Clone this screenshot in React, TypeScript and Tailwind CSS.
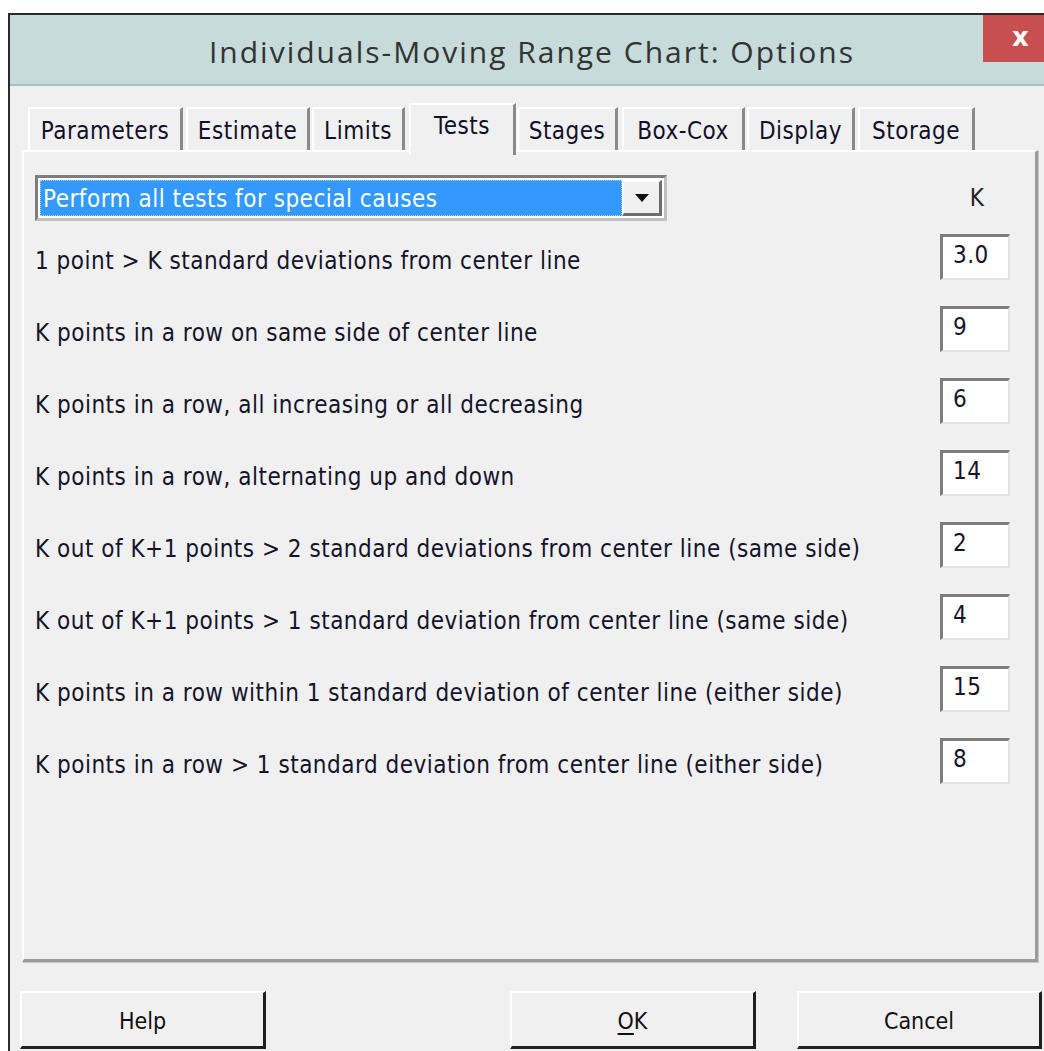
import { useState } from "react";

const tabs = [
  { name: "Parameters", w: "w-[155px] mr-[3px]" },
  { name: "Estimate", w: "w-[124px] mr-[2px]" },
  { name: "Limits", w: "w-[93px]" },
  { name: "Tests", w: "w-[107px] ml-[4px] mr-[1px]" },
  { name: "Stages", w: "w-[101px] mr-[4px]" },
  { name: "Box-Cox", w: "w-[123px] mr-[2px]" },
  { name: "Display", w: "w-[108px] mr-[3px]" },
  { name: "Storage", w: "w-[117px]" },
];

const tests = [
  { label: "1 point > K standard deviations from center line", k: "3.0" },
  { label: "K points in a row on same side of center line", k: "9" },
  { label: "K points in a row, all increasing or all decreasing", k: "6" },
  { label: "K points in a row, alternating up and down", k: "14" },
  { label: "K out of K+1 points > 2 standard deviations from center line (same side)", k: "2" },
  { label: "K out of K+1 points > 1 standard deviation from center line (same side)", k: "4" },
  { label: "K points in a row within 1 standard deviation of center line (either side)", k: "15" },
  { label: "K points in a row > 1 standard deviation from center line (either side)", k: "8" },
];

const ui = { fontFamily: '"DejaVu Sans Condensed", "DejaVu Sans", sans-serif' };

const DialogButton = ({ children, w }: { children: React.ReactNode; w: string }) => (
  <button
    className={`${w} h-[58px] bg-[#f0f0f0] border-t-2 border-l-2 border-white border-r-[3px] border-b-[3px] border-r-[#1f1f1f] border-b-[#1f1f1f] text-[23px] text-[#111] pt-[4px]`}
    style={ui}
  >
    {children}
  </button>
);

export default function App() {
  const [active] = useState("Tests");

  return (
    <div className="w-[1044px] h-[1051px] bg-white overflow-hidden pt-[13px] pl-[8px]">
      <div className="w-[1050px] h-[1050px] border-l-2 border-t-2 border-[#2a2a2a] bg-[#f0f0f0] flex flex-col">
        {/* title bar */}
        <div className="relative h-[71px] bg-[#c6dbda] border-b-2 border-[#a8c3c1] flex items-center justify-center">
          <span
            className="text-[30px] tracking-[2px] text-[#333] pt-[4px] pr-[4px]"
            style={{ fontFamily: '"Open Sans", sans-serif' }}
          >
            Individuals-Moving Range Chart: Options
          </span>
          <div className="absolute top-0 right-0 w-[75px] h-[47px] bg-[#c74f4f] flex items-center justify-center">
            <span className="text-white text-[26px] font-semibold leading-none pb-[3px]" style={{ fontFamily: '"DejaVu Sans", sans-serif' }}>
              x
            </span>
          </div>
        </div>

        {/* tab strip */}
        <div className="flex items-end pl-[18px] pt-[16px] relative z-10 h-[64px]">
          {tabs.map((t) => {
            const on = t.name === active;
            return (
              <div
                key={t.name}
                className={`${t.w} flex items-center justify-center text-[24px] tracking-[0.5px] text-[#101028] bg-[#f0f0f0] border-t-2 border-l-2 border-white border-r-[3px] border-r-[#8a8a8a] ${
                  on ? "h-[52px] -mb-[5px] pb-[9px]" : "h-[43px] pt-[2px]"
                }`}
                style={ui}
              >
                {t.name}
              </div>
            );
          })}
        </div>

        {/* tab panel */}
        <div className="ml-[12px] w-[1016px] h-[812px] border-t-2 border-l-2 border-white border-r-[3px] border-b-[3px] border-r-[#9b9b9b] border-b-[#9b9b9b] shadow-[1px_1px_0_#c8c8c8] px-[11px] pt-[23px]" style={ui}>
          <div className="flex items-start justify-between pr-[40px]">
            <div className="w-[632px] h-[46px] border-t-[3px] border-l-[3px] border-[#7d7d7d] border-r-[3px] border-b-[3px] border-r-[#c0c0c0] border-b-[#c0c0c0] bg-white flex p-[2px]">
              <div className="flex-1 bg-[#3399ff] text-white text-[24px] tracking-[0.5px] leading-[36px] pl-[2px] border border-dotted border-[#a9d1ff]">
                Perform all tests for special causes
              </div>
              <div className="w-[40px] bg-[#f0f0f0] border-t-2 border-l-2 border-white border-r-[3px] border-b-[3px] border-r-[#6e6e6e] border-b-[#6e6e6e] flex items-center justify-center">
                <svg width="16" height="10" viewBox="0 0 16 10">
                  <path d="M1 1h14L8 9z" fill="#111" />
                </svg>
              </div>
            </div>
            <span className="text-[24px] text-[#222] pt-[5px]">K</span>
          </div>

          <div className="flex flex-col">
            {tests.map((t) => (
              <div key={t.label} className="h-[72px] flex items-center justify-between pr-[14px]">
                <span className="text-[24px] tracking-[0.5px] text-[#14142a] pt-[7px]">{t.label}</span>
                <div className="w-[70px] h-[46px] bg-white border-t-[3px] border-l-[3px] border-[#7d7d7d] border-r-2 border-b-2 border-r-[#e3e3e3] border-b-[#e3e3e3] text-[24px] tracking-[0.5px] text-[#14142a] pl-[10px] leading-[36px]">
                  {t.k}
                </div>
              </div>
            ))}
          </div>
        </div>

        {/* dialog buttons */}
        <div className="flex items-start pl-[10px] pt-[29px]">
          <DialogButton w="w-[246px]">Help</DialogButton>
          <div className="w-[244px]" />
          <DialogButton w="w-[246px]">
            <span className="underline underline-offset-4">O</span>K
          </DialogButton>
          <div className="w-[41px]" />
          <DialogButton w="w-[245px]">Cancel</DialogButton>
        </div>
      </div>
    </div>
  );
}
